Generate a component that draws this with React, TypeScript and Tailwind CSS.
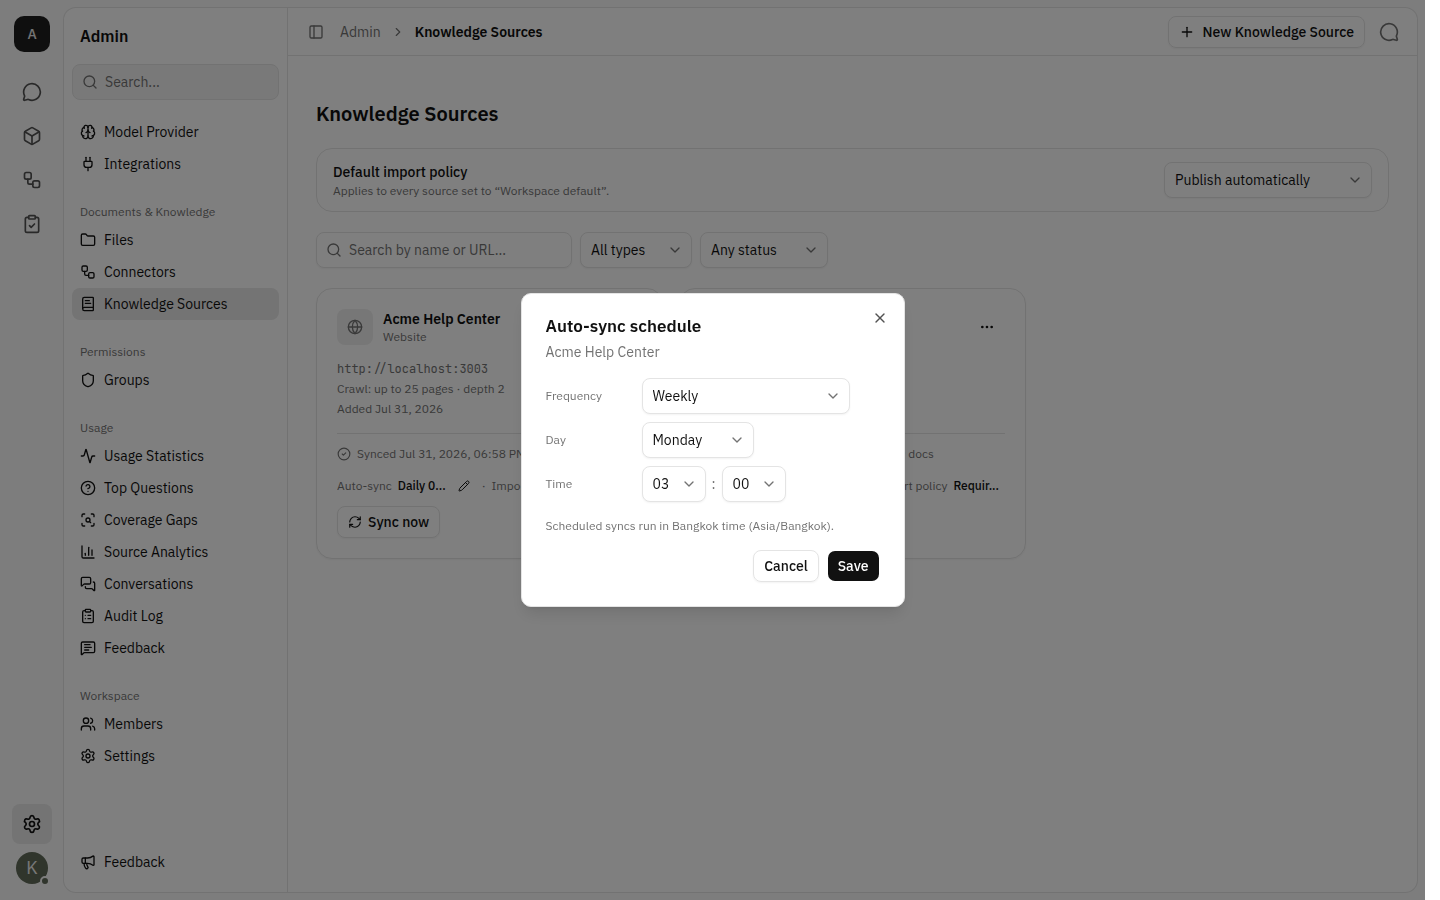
import type { ReactNode } from "react";
import {
  Activity,
  BookText,
  Box,
  Brain,
  ChartColumn,
  ChevronDown,
  ChevronRight,
  CircleCheck,
  CircleQuestionMark,
  ClipboardCheck,
  ClipboardList,
  Ellipsis,
  Folder,
  Globe,
  Megaphone,
  MessageCircle,
  MessageSquareText,
  MessagesSquare,
  PanelLeft,
  Pencil,
  Plug,
  Plus,
  RefreshCw,
  ScanSearch,
  Search,
  Settings,
  Shield,
  Users,
  Workflow,
  X,
  type LucideIcon,
} from "lucide-react";

type NavEntry = { label: string; icon: LucideIcon; active?: boolean };
type NavGroup = { title?: string; entries: NavEntry[] };

const navGroups: NavGroup[] = [
  {
    entries: [
      { label: "Model Provider", icon: Brain },
      { label: "Integrations", icon: Plug },
    ],
  },
  {
    title: "Documents & Knowledge",
    entries: [
      { label: "Files", icon: Folder },
      { label: "Connectors", icon: Workflow },
      { label: "Knowledge Sources", icon: BookText, active: true },
    ],
  },
  { title: "Permissions", entries: [{ label: "Groups", icon: Shield }] },
  {
    title: "Usage",
    entries: [
      { label: "Usage Statistics", icon: Activity },
      { label: "Top Questions", icon: CircleQuestionMark },
      { label: "Coverage Gaps", icon: ScanSearch },
      { label: "Source Analytics", icon: ChartColumn },
      { label: "Conversations", icon: MessagesSquare },
      { label: "Audit Log", icon: ClipboardList },
      { label: "Feedback", icon: MessageSquareText },
    ],
  },
  {
    title: "Workspace",
    entries: [
      { label: "Members", icon: Users },
      { label: "Settings", icon: Settings },
    ],
  },
];

const railLinks: NavEntry[] = [
  { label: "Chat", icon: MessageCircle },
  { label: "Models", icon: Box },
  { label: "Workflows", icon: Workflow },
  { label: "Tasks", icon: ClipboardCheck },
];

function NavRow({ label, icon: Icon, active }: NavEntry) {
  return (
    <a
      href="#"
      className={
        active
          ? "flex h-8 items-center gap-2 rounded-lg bg-[#e8e8e8] px-2 text-sm"
          : "flex h-8 items-center gap-2 rounded-lg px-2 text-sm"
      }
    >
      <Icon className="size-4" />
      {label}
    </a>
  );
}

function SelectBox({ label, id, value, className }: { label?: string; id?: string; value: string; className: string }) {
  return (
    <div className={`relative flex h-9 items-center ${className}`}>
      <select
        id={id}
        aria-label={label}
        defaultValue={value}
        className="h-9 w-full appearance-none rounded-lg border border-[#e4e4e4] bg-white pr-7 pl-2.5 text-sm shadow-xs"
      >
        <option>{value}</option>
      </select>
      <ChevronDown className="pointer-events-none absolute right-[9px] size-4 text-[#737373]" />
    </div>
  );
}

function Rail() {
  return (
    <nav aria-label="Workspace" className="flex w-16 shrink-0 flex-col items-center py-4">
      <a
        href="#"
        className="flex size-9 items-center justify-center rounded-[10px] bg-[#1f1f1f] text-sm font-medium text-[#e8e8e8]"
      >
        A
      </a>
      <div className="mt-5 flex flex-col gap-1">
        {railLinks.map(({ label, icon: Icon }) => (
          <a key={label} href="#" aria-label={label} className="flex size-10 items-center justify-center text-[#525252]">
            <Icon className="size-5" />
          </a>
        ))}
      </div>
      <a
        href="#"
        aria-label="Settings"
        className="mt-auto flex size-10 items-center justify-center rounded-lg bg-[#e8e8e8]"
      >
        <Settings className="size-5" />
      </a>
      <button
        aria-label="Account"
        className="relative mt-2 flex size-8 items-center justify-center rounded-full bg-[#606a58] text-lg text-[#f0f0f0]"
      >
        K
        <span className="absolute -right-0.5 -bottom-0.5 size-2.5 rounded-full border-2 border-[#fafafa] bg-[#606a58]" />
      </button>
    </nav>
  );
}

function Sidebar() {
  return (
    <aside className="flex w-56 shrink-0 flex-col border-r border-[#e4e4e4] px-2 pb-3.5">
      <h2 className="flex h-14 items-center px-2 text-base font-semibold">Admin</h2>
      <div className="relative flex items-center">
        <Search className="absolute left-2.5 size-4 text-[#737373]" />
        <input
          type="search"
          aria-label="Search"
          placeholder="Search..."
          className="h-9 w-full rounded-lg border border-[#e4e4e4] bg-[#f2f2f2] pr-3 pl-8 text-sm placeholder:text-[#737373]"
        />
      </div>
      <nav aria-label="Admin" className="mt-4 flex flex-col gap-5">
        {navGroups.map((group, index) => (
          <div key={index}>
            {group.title ? (
              <h3 className="flex h-6 items-center px-2 text-xs text-[#737373]">{group.title}</h3>
            ) : null}
            {group.entries.map((entry) => (
              <NavRow key={entry.label} {...entry} />
            ))}
          </div>
        ))}
      </nav>
      <div className="mt-auto">
        <NavRow label="Feedback" icon={Megaphone} />
      </div>
    </aside>
  );
}

function TopBar() {
  return (
    <header className="flex h-12 items-center border-b border-[#e4e4e4] pr-[18px] pl-5">
      <button aria-label="Toggle sidebar" className="text-[#737373]">
        <PanelLeft className="size-4" />
      </button>
      <nav aria-label="Breadcrumb" className="ml-4 flex items-center gap-2.5 text-sm">
        <a href="#" className="text-[#737373]">
          Admin
        </a>
        <ChevronRight className="size-3.5 text-[#737373]" />
        <span className="font-semibold">Knowledge Sources</span>
      </nav>
      <button className="ml-auto flex h-8 items-center gap-2 rounded-lg border border-[#e4e4e4] px-2.5 text-sm font-medium shadow-xs">
        <Plus className="size-4" />
        New Knowledge Source
      </button>
      <button aria-label="Open assistant" className="ml-3.5 text-[#737373]">
        <MessageCircle className="size-5 -scale-x-100" />
      </button>
    </header>
  );
}

type SourceCardProps = {
  name: string;
  url: string;
  summary: string;
  added: string;
  documents: string;
  schedule: string;
  spread?: boolean;
};

function Field({ label, value, children }: { label: string; value: string; children?: ReactNode }) {
  return (
    <div className="flex shrink-0 items-center gap-1.5">
      <span>{label}</span>
      <span className="font-medium text-[#111111]">{value}</span>
      {children}
    </div>
  );
}

function SourceCard({ name, url, summary, added, documents, schedule, spread }: SourceCardProps) {
  return (
    <article className="flex min-w-0 flex-col rounded-2xl border border-[#e4e4e4] p-5 text-xs text-[#737373] shadow-xs">
      <div className="flex items-center gap-2.5">
        <span className="flex size-9 items-center justify-center rounded-lg bg-[#efefef]">
          <Globe className="size-4" />
        </span>
        <div className="min-w-0 flex-1">
          <h2 className="text-sm leading-5 font-semibold text-[#111111]">{name}</h2>
          <p className="leading-4">Website</p>
        </div>
        <button aria-label={`Actions for ${name}`} className="flex size-9 items-center justify-center text-[#111111]">
          <Ellipsis className="size-4" />
        </button>
      </div>
      <div className="mt-3.5 leading-5">
        <p className="font-['JetBrains_Mono','IBM_Plex_Mono','Liberation_Mono',monospace]">{url}</p>
        <p>{summary}</p>
        <p>{added}</p>
      </div>
      <div className="mt-3.5 flex items-center gap-1.5 border-t border-[#e4e4e4] pt-3">
        <CircleCheck className="size-3.5" />
        <span>Synced Jul 31, 2026, 06:58 PM · {documents}</span>
      </div>
      <div
        className={
          spread
            ? "mt-3 flex h-6 items-center justify-between gap-1.5 overflow-hidden"
            : "mt-3 flex h-6 items-center gap-1.5 overflow-hidden"
        }
      >
        <Field label="Auto-sync" value={schedule}>
          <button aria-label="Edit auto-sync schedule" className="flex size-6 items-center justify-center text-[#111111]">
            <Pencil className="size-3" />
          </button>
        </Field>
        <div className="flex gap-1.5 pr-1.5">
          <span>·</span>
          <Field label="Import policy" value="Requir..." />
        </div>
      </div>
      <button className="mt-2 flex h-8 items-center gap-1.5 self-start rounded-lg border border-[#e4e4e4] px-2.5 text-sm font-medium text-[#111111] shadow-xs">
        <RefreshCw className="size-3.5" />
        Sync now
      </button>
    </article>
  );
}

function Content() {
  return (
    <main className="flex flex-col px-7 pt-11">
      <h1 className="text-xl leading-7 font-semibold">Knowledge Sources</h1>
      <section className="mt-5 flex h-16 items-center justify-between rounded-2xl border border-[#e4e4e4] px-4">
        <div className="pt-0.5">
          <label htmlFor="policy" className="block text-sm leading-5 font-medium">
            Default import policy
          </label>
          <p className="text-xs leading-[18px] text-[#737373]">Applies to every source set to “Workspace default”.</p>
        </div>
        <SelectBox id="policy" value="Publish automatically" className="w-52" />
      </section>
      <div className="mt-5 flex gap-2">
        <div className="relative flex w-64 items-center">
          <Search className="absolute left-2.5 size-4 text-[#737373]" />
          <input
            type="search"
            aria-label="Search by name or URL"
            placeholder="Search by name or URL..."
            className="h-9 w-full rounded-lg border border-[#e4e4e4] pr-3 pl-8 text-sm shadow-xs placeholder:text-[#737373]"
          />
        </div>
        <SelectBox label="Type" value="All types" className="w-28" />
        <SelectBox label="Status" value="Any status" className="w-32" />
      </div>
      <div className="mt-5 grid grid-cols-3 gap-4">
        <SourceCard
          name="Acme Help Center"
          url="http://localhost:3003"
          summary="Crawl: up to 25 pages · depth 2"
          added="Added Jul 31, 2026"
          documents="5 docs"
          schedule="Daily 0..."
        />
        <SourceCard
          name="Acme Blog"
          url="http://localhost:3003"
          summary="Crawl: single page"
          added="Added Jul 31, 2026"
          documents="9 docs"
          schedule="Off"
          spread
        />
      </div>
    </main>
  );
}

function ScheduleDialog() {
  return (
    <div className="fixed inset-y-0 right-[15px] left-0 flex items-center justify-center bg-black/50">
      <form
        role="dialog"
        aria-modal="true"
        aria-labelledby="schedule-title"
        className="relative w-96 rounded-[10px] border border-[#e4e4e4] bg-white p-6 shadow-lg"
      >
        <h2 id="schedule-title" className="text-[17px] leading-4 font-semibold">
          Auto-sync schedule
        </h2>
        <p className="mt-2 text-sm text-[#737373]">Acme Help Center</p>
        <button type="button" aria-label="Close" className="absolute top-4 right-4 text-[#525252]">
          <X className="size-4" />
        </button>
        <div className="mt-4 flex flex-col gap-2">
          <div className="flex items-center">
            <label htmlFor="frequency" className="w-24 text-xs text-[#737373]">
              Frequency
            </label>
            <SelectBox id="frequency" value="Weekly" className="w-52" />
          </div>
          <div className="flex items-center">
            <label htmlFor="day" className="w-24 text-xs text-[#737373]">
              Day
            </label>
            <SelectBox id="day" value="Monday" className="w-28" />
          </div>
          <div className="flex items-center">
            <label htmlFor="hour" className="w-24 text-xs text-[#737373]">
              Time
            </label>
            <SelectBox id="hour" value="03" className="w-16" />
            <span className="w-4 text-center text-sm text-[#737373]">:</span>
            <SelectBox label="Minute" value="00" className="w-16" />
          </div>
        </div>
        <p className="mt-4 text-xs text-[#737373]">Scheduled syncs run in Bangkok time (Asia/Bangkok).</p>
        <div className="mt-4 flex justify-end gap-2">
          <button
            type="button"
            className="h-8 rounded-lg border border-[#e4e4e4] px-2.5 text-sm font-medium shadow-xs"
          >
            Cancel
          </button>
          <button
            type="button"
            className="h-8 rounded-lg border border-transparent bg-[#111111] bg-clip-padding px-2.5 text-sm font-medium text-white"
          >
            Save
          </button>
        </div>
      </form>
    </div>
  );
}

export default function App() {
  return (
    <div className="mr-[15px] font-['IBM_Plex_Sans',Roboto,sans-serif] text-[#111111]">
      <div className="flex h-screen bg-[#fafafa]">
        <Rail />
        <div className="my-2 mr-2 flex min-w-0 flex-1 overflow-hidden rounded-xl bg-white ring-1 ring-[#e4e4e4]">
          <Sidebar />
          <div className="min-w-0 flex-1">
            <TopBar />
            <Content />
          </div>
        </div>
      </div>
      <ScheduleDialog />
    </div>
  );
}
